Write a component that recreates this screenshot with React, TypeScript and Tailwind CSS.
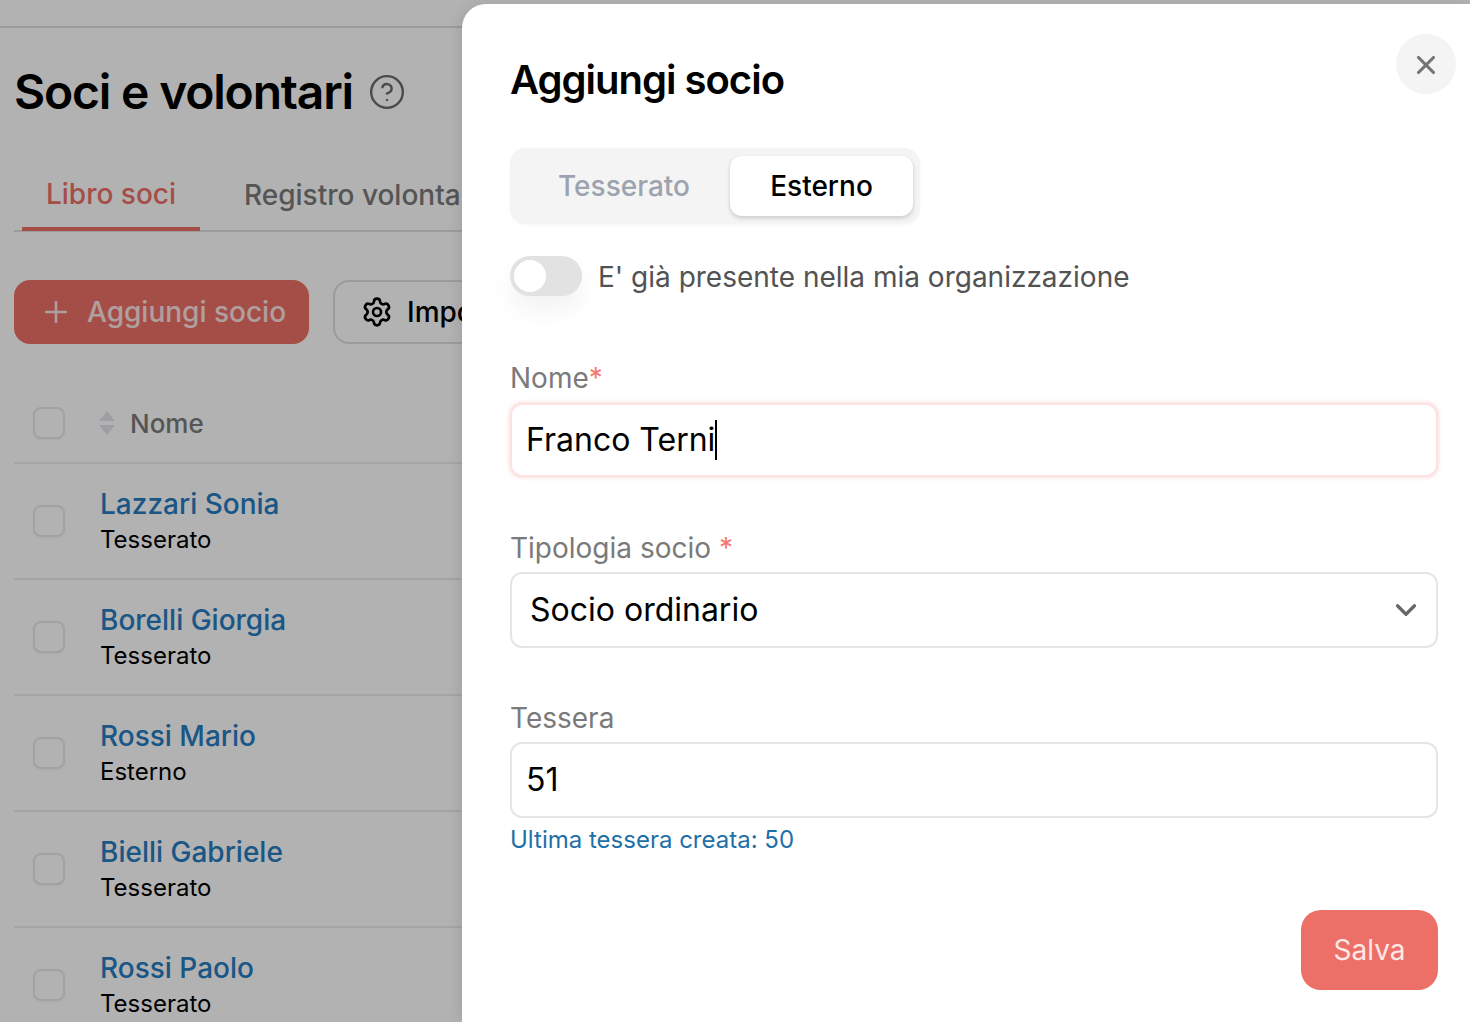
import { ChevronDown, CircleHelp, Plus, Settings, X } from 'lucide-react'

const MEMBERS = [
  { name: 'Lazzari Sonia', kind: 'Tesserato' },
  { name: 'Borelli Giorgia', kind: 'Tesserato' },
  { name: 'Rossi Mario', kind: 'Esterno' },
  { name: 'Bielli Gabriele', kind: 'Tesserato' },
  { name: 'Rossi Paolo', kind: 'Tesserato' },
]

function Checkbox() {
  return <div className="h-8 w-8 rounded-lg border-2 border-[#e8e8e8] bg-white shadow-[0_1px_2px_rgba(0,0,0,0.05)]" />
}

function Page() {
  return (
    <div className="h-full w-[700px] overflow-hidden bg-white">
      <div className="h-[28px] border-b-2 border-[#dedede]" />
      <div className="flex h-[128px] items-center gap-[15px] pl-[14px]">
        <h1 className="text-[48px] font-semibold tracking-[-0.025em] text-black">Soci e volontari</h1>
        <CircleHelp size={38} strokeWidth={1.5} className="text-[#6b6b6b]" />
      </div>

      <div className="ml-[14px] flex h-[76px] items-start border-b-2 border-[#dedede]">
        <div className="ml-2 flex h-[75px] w-[178px] items-center justify-center border-b-4 border-[#ec7068] pt-[4px] text-[28px] font-medium text-[#ec7068]">
          Libro soci
        </div>
        <div className="ml-[44px] flex h-[75px] items-center pt-[2px] text-[28px] font-medium whitespace-nowrap text-[#7a7a7a]">
          Registro volontari
        </div>
      </div>

      <div className="mt-[48px] flex gap-6 pl-[14px]">
        <div className="flex h-16 w-[295px] items-center gap-[14px] rounded-2xl bg-[#ec7068] pl-[25px] text-[28px] font-medium text-[#fbe4e2]">
          <Plus size={34} strokeWidth={1.75} />
          Aggiungi socio
        </div>
        <div className="flex h-16 w-[260px] items-center gap-[14px] rounded-2xl border-2 border-[#dedede] pl-[26px] text-[28px] font-medium text-black">
          <Settings size={32} strokeWidth={2} />
          Importa
        </div>
      </div>

      <div className="mt-[36px] ml-[14px]">
        <div className="flex h-[84px] items-center border-b-2 border-[#ececec] pt-[4px]">
          <div className="ml-[19px]">
            <Checkbox />
          </div>
          <svg width="18" height="24" viewBox="0 0 18 24" className="ml-[33px] fill-[#e2e4e9]">
            <path d="M9 0l8 10H1zM9 24L1 14h16z" />
          </svg>
          <span className="ml-[14px] text-[26px] font-medium text-[#7a7a7a]">Nome</span>
        </div>
        {MEMBERS.map((member) => (
          <div key={member.name} className="flex h-[116px] items-center border-b-2 border-[#ebebeb]">
            <div className="ml-[19px]">
              <Checkbox />
            </div>
            <div className="ml-[35px] mt-[2px]">
              <div className="text-[28px] leading-[36px] font-medium text-[#267bc0]">{member.name}</div>
              <div className="text-[24px] leading-[36px] text-black">{member.kind}</div>
            </div>
          </div>
        ))}
      </div>
    </div>
  )
}

function Modal() {
  return (
    <div className="absolute top-[4px] right-0 bottom-0 left-[462px] rounded-tl-[24px] bg-white pt-[46px] pr-[32px] pl-[48px] shadow-[-4px_0_12px_rgba(0,0,0,0.08)]">
      <button
        type="button"
        className="absolute top-[30px] right-[14px] flex h-[60px] w-[60px] items-center justify-center rounded-full bg-[#f4f4f4] pt-[2px] text-[#737373]"
      >
        <X size={30} strokeWidth={2.5} />
      </button>

      <h2 className="text-[40px] leading-[60px] font-semibold tracking-[-0.025em] text-black">Aggiungi socio</h2>

      <div className="mt-[38px] flex h-[76px] w-[410px] items-center rounded-2xl bg-[#f4f4f4] p-2 text-[28px] font-medium shadow-[0_1px_3px_rgba(0,0,0,0.04)]">
        <div className="flex w-[212px] shrink-0 justify-center text-[#9ca3af]">Tesserato</div>
        <div className="flex h-[60px] w-[183px] shrink-0 items-center justify-center rounded-xl bg-white text-black shadow-[0_2px_4px_rgba(0,0,0,0.18)]">
          Esterno
        </div>
      </div>

      <div className="mt-[32px] flex h-[40px] items-center gap-4">
        <div className="flex h-[40px] w-[72px] items-center rounded-full bg-[#e2e2e2] px-1 shadow-[0_14px_24px_rgba(0,0,0,0.05)]">
          <div className="h-8 w-8 rounded-full bg-white" />
        </div>
        <span className="pt-[2px] text-[28px] text-[#525252]">E' già presente nella mia organizzazione</span>
      </div>

      <div className="mt-[62px] text-[28px] leading-[40px] text-[#7a7a7a]">
        Nome<span className="text-[#f47a72]">*</span>
      </div>
      <div className="mt-[5px] flex h-[74px] items-center rounded-xl border-2 border-[#fbe3e1] bg-white pl-[14px] text-[32px] text-black shadow-[0_0_4px_rgba(236,112,104,0.35)]">
        Franco Terni
        <span className="h-[40px] w-[2px] bg-black" />
      </div>

      <div className="mt-[51px] text-[28px] leading-[40px] text-[#7a7a7a]">
        Tipologia socio <span className="text-[#f47a72]">*</span>
      </div>
      <div className="mt-1 flex h-[76px] items-center justify-between rounded-xl border-2 border-[#e5e5e5] pr-[13px] pl-[18px] text-[32px] text-black">
        Socio ordinario
        <ChevronDown size={34} strokeWidth={2.25} className="text-[#666666]" />
      </div>

      <div className="mt-[50px] text-[28px] leading-[40px] text-[#7a7a7a]">Tessera</div>
      <div className="mt-1 flex h-[76px] items-center rounded-xl border-2 border-[#e5e5e5] pl-[14px] text-[32px] text-black">
        51
      </div>
      <div className="mt-[5px] text-[24px] leading-[34px] text-[#1f6fa8]">Ultima tessera creata: 50</div>

      <div className="mt-[53px] flex justify-end">
        <button
          type="button"
          className="h-20 w-[137px] rounded-[20px] bg-[#ec7068] text-[28px] text-[#fde8e6]"
        >
          Salva
        </button>
      </div>
    </div>
  )
}

export default function App() {
  return (
    <div className="relative h-[1022px] w-[1470px] overflow-hidden bg-white font-['Inter',sans-serif]">
      <Page />
      <div className="absolute inset-0 bg-black/30" />
      <Modal />
    </div>
  )
}
